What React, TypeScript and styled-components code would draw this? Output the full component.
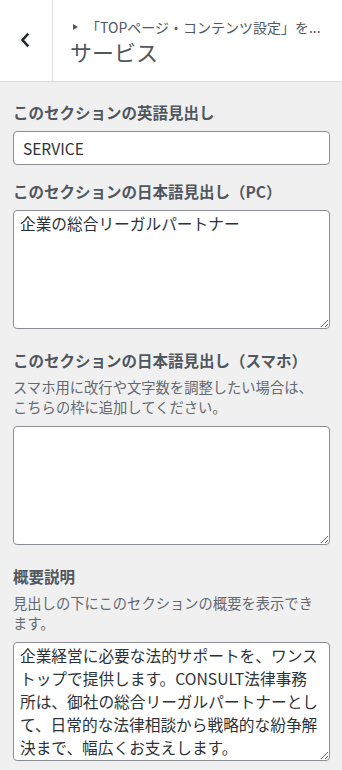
import React from 'react';
import styled, { createGlobalStyle } from 'styled-components';

const GlobalStyle = createGlobalStyle`
  html, body {
    margin: 0;
    padding: 0;
    background: #f0f0f1;
  }
  body {
    font-family: "Noto Sans CJK JP", "Noto Sans", sans-serif;
    color: #50575e;
    text-spacing-trim: space-all;
  }
  * {
    box-sizing: border-box;
  }
`;

const Panel = styled.div`
  width: 342px;
  min-height: 770px;
  background: #f0f0f1;
`;

const Header = styled.div`
  display: flex;
  height: 82px;
  background: #fff;
  border-bottom: 1px solid #dcdcde;
`;

const BackButton = styled.button`
  width: 53px;
  flex-shrink: 0;
  display: flex;
  align-items: center;
  justify-content: center;
  padding: 0 2px 2px 0;
  background: transparent;
  border: none;
  border-right: 1px solid #dcdcde;
  color: #1d2327;
  cursor: pointer;
`;

const HeaderText = styled.div`
  flex: 1;
  min-width: 0;
  padding: 16px 8px 0 17px;
`;

const Breadcrumb = styled.div`
  display: flex;
  align-items: center;
  padding-left: 3px;
  font-size: 14px;
  line-height: 22px;
  color: #50575e;
  white-space: nowrap;

  svg {
    margin-right: 8px;
    flex-shrink: 0;
  }
`;

const Title = styled.h1`
  margin: -1px 0 0;
  font-size: 22px;
  font-weight: 400;
  line-height: 28px;
  color: #50575e;
`;

const Body = styled.div`
  padding: 18px 12px 10px 13px;
`;

const Control = styled.div<{ $gap: number }>`
  margin-bottom: ${p => p.$gap}px;
`;

const Label = styled.div`
  font-size: 15.5px;
  font-weight: 700;
  line-height: 24px;
  color: #50575e;
  margin-bottom: 7px;
`;

const Description = styled.div`
  max-width: 306px;
  font-size: 14.3px;
  line-height: 20px;
  color: #646970;
  margin: -2px 0 9px;
`;

const TextInput = styled.input`
  display: block;
  width: 317px;
  height: 34px;
  padding: 0 9px;
  font-family: "Noto Sans CJK JP", "Noto Sans", sans-serif;
  font-size: 15.5px;
  color: #2c3338;
  background: #fff;
  border: 1px solid #8c8f94;
  border-radius: 4px;
  outline: none;
`;

const TextArea = styled.textarea`
  display: block;
  width: 317px;
  height: 119px;
  padding: 1px 6px 0;
  font-family: "Noto Sans CJK JP", "Noto Sans", sans-serif;
  font-size: 15.7px;
  line-height: 23px;
  color: #2c3338;
  background: #fff;
  border: 1px solid #8c8f94;
  border-radius: 4px;
  resize: vertical;
  outline: none;
  overflow: hidden;
  text-spacing-trim: space-all;
`;

const summary = [
  '企業経営に必要な法的サポートを、ワンス',
  'トップで提供します。CONSULT法律事務',
  '所は、御社の総合リーガルパートナーとし',
  'て、日常的な法律相談から戦略的な紛争解',
  '決まで、幅広くお支えします。',
].join('\n');

export default function App() {
  return (
    <Panel>
      <GlobalStyle />
      <Header>
        <BackButton aria-label="戻る">
          <svg width="12" height="16" viewBox="0 0 12 16">
            <path
              d="M8.5 2.5 L3.5 8 L8.5 13.5"
              fill="none"
              stroke="#1d2327"
              strokeWidth="2.4"
              strokeLinecap="square"
            />
          </svg>
        </BackButton>
        <HeaderText>
          <Breadcrumb>
            <svg width="5" height="6" viewBox="0 0 5 6">
              <path d="M0 0 L5 3 L0 6 Z" fill="#50575e" />
            </svg>
            <span>「TOPページ・コンテンツ設定」を...</span>
          </Breadcrumb>
          <Title>サービス</Title>
        </HeaderText>
      </Header>
      <Body>
        <Control $gap={14}>
          <Label>このセクションの英語見出し</Label>
          <TextInput defaultValue="SERVICE" />
        </Control>
        <Control $gap={19}>
          <Label>このセクションの日本語見出し（PC）</Label>
          <TextArea defaultValue="企業の総合リーガルパートナー" />
        </Control>
        <Control $gap={19}>
          <Label>このセクションの日本語見出し（スマホ）</Label>
          <Description>
            スマホ用に改行や文字数を調整したい場合は、こちらの枠に追加してください。
          </Description>
          <TextArea defaultValue="" />
        </Control>
        <Control $gap={0}>
          <Label>概要説明</Label>
          <Description>
            見出しの下にこのセクションの概要を表示できます。
          </Description>
          <TextArea defaultValue={summary} />
        </Control>
      </Body>
    </Panel>
  );
}
